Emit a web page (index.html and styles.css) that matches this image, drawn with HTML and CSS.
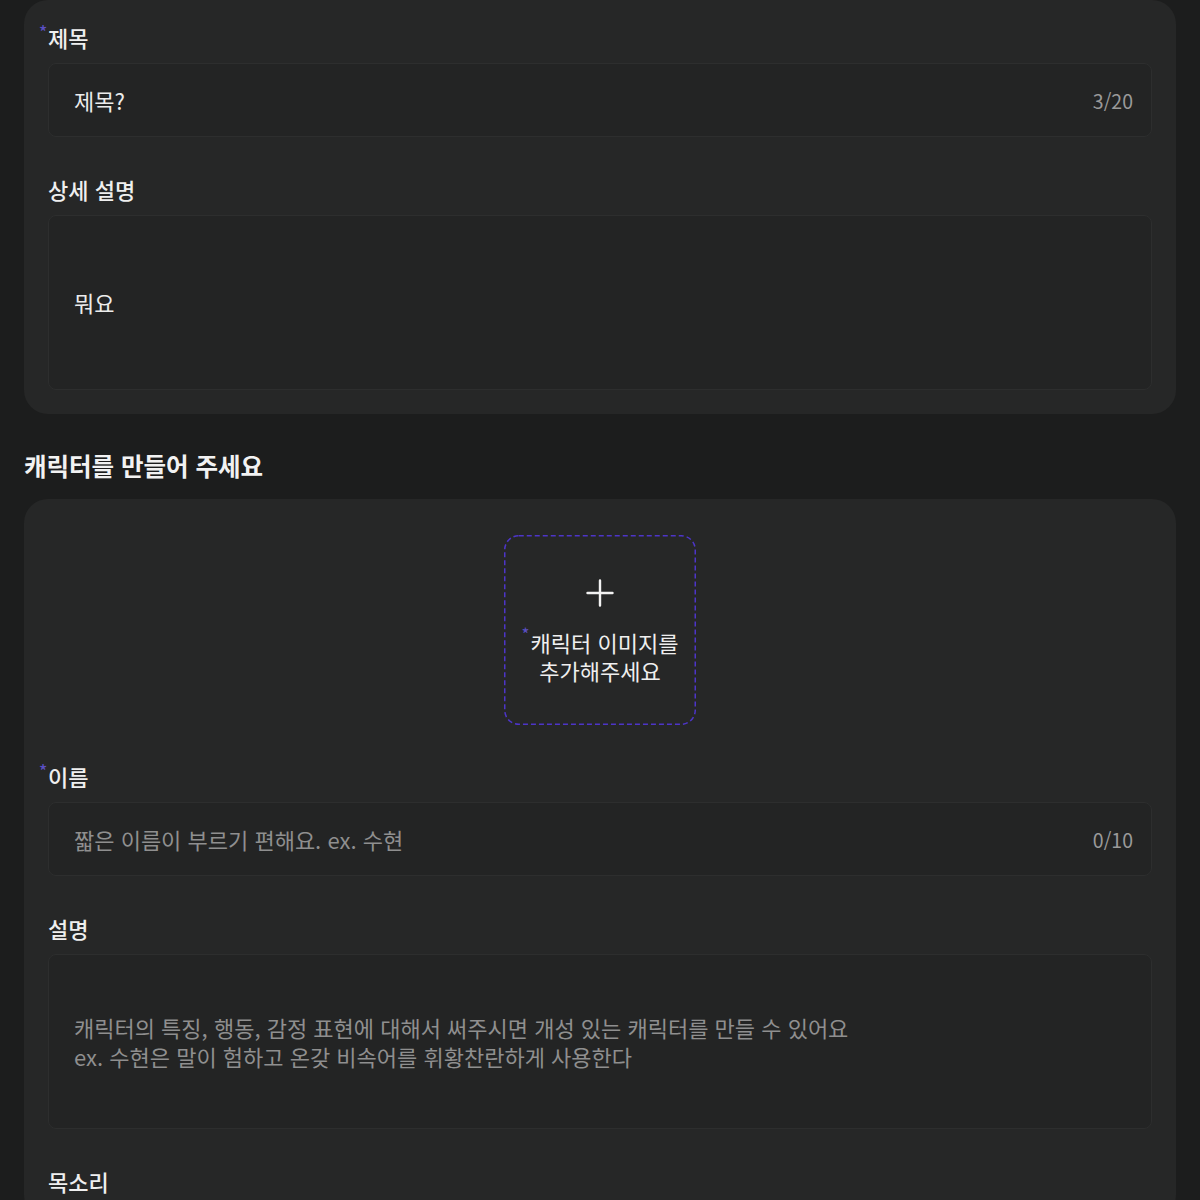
FILE: index.html
```html
<!DOCTYPE html>
<html lang="ko">
<head>
<meta charset="utf-8">
<link rel="stylesheet" href="styles.css">
</head>
<body>
<main class="page">
  <section class="card">
    <div class="field">
      <label class="label required">제목</label>
      <div class="input">
        <span class="value">제목?</span>
        <span class="counter">3/20</span>
      </div>
    </div>
    <div class="field">
      <label class="label">상세 설명</label>
      <div class="textarea">
        <span class="value">뭐요</span>
      </div>
    </div>
  </section>

  <h2 class="heading">캐릭터를 만들어 주세요</h2>

  <section class="card">
    <div class="upload-wrap">
      <div class="upload">
        <svg class="dash" width="192" height="190" viewBox="0 0 192 190" aria-hidden="true">
          <rect x="0.75" y="0.75" width="190.5" height="188.5" rx="14" ry="14" fill="none" stroke="#4d35c8" stroke-width="1.5" stroke-dasharray="5 3"/>
        </svg>
        <svg class="plus" width="28" height="28" viewBox="0 0 28 28" aria-hidden="true">
          <path d="M14 1.5v25M1.5 14h25" stroke="#f2f2f2" stroke-width="2.4" stroke-linecap="round" fill="none"/>
        </svg>
        <div class="upload-text">
          <div class="upload-line"><span class="star">*</span>캐릭터 이미지를</div>
          <div class="upload-line">추가해주세요</div>
        </div>
      </div>
    </div>
    <div class="field">
      <label class="label required">이름</label>
      <div class="input">
        <span class="placeholder">짧은 이름이 부르기 편해요. ex. 수현</span>
        <span class="counter">0/10</span>
      </div>
    </div>
    <div class="field">
      <label class="label">설명</label>
      <div class="textarea">
        <span class="placeholder">캐릭터의 특징, 행동, 감정 표현에 대해서 써주시면 개성 있는 캐릭터를 만들 수 있어요<br>ex. 수현은 말이 험하고 온갖 비속어를 휘황찬란하게 사용한다</span>
      </div>
    </div>
    <div class="field">
      <label class="label">목소리</label>
    </div>
  </section>
</main>
</body>
</html>
```

FILE: styles.css
```css
* { box-sizing: border-box; }
html, body {
  margin: 0;
  padding: 0;
  background: #1c1d1d;
  color: #efefef;
  font-family: "Noto Sans CJK KR", "Noto Sans", sans-serif;
}
.page {
  padding: 0 24px;
  display: flex;
  flex-direction: column;
}
.card {
  background: #262727;
  border-radius: 24px;
  padding: 23px 24px 24px;
  display: flex;
  flex-direction: column;
  gap: 38px;
}
.field {
  display: flex;
  flex-direction: column;
  gap: 12px;
}
.label {
  position: relative;
  font-size: 22px;
  line-height: 28px;
  font-weight: 500;
  color: #efefef;
}
.required::before,
.star {
  content: "*";
  color: #5b4fc4;
  font-size: 17px;
  line-height: 1;
}
.required::before {
  position: absolute;
  left: -9px;
  top: 0;
}
.input {
  height: 74px;
  background: #232424;
  border: 1px solid #2d2e2e;
  border-radius: 8px;
  padding: 0 18px 0 25px;
  display: flex;
  align-items: center;
  justify-content: space-between;
}
.textarea {
  height: 175px;
  background: #232424;
  border: 1px solid #2d2e2e;
  border-radius: 8px;
  padding: 0 25px;
  display: flex;
  align-items: center;
}
.value {
  font-size: 22px;
  line-height: 29px;
  color: #ececec;
}
.placeholder {
  font-size: 22px;
  line-height: 29px;
  color: #8f8f8f;
}
.counter {
  font-size: 19.5px;
  color: #9a9a9a;
}
.heading {
  margin: 35px 0 16px;
  font-size: 24.5px;
  line-height: 34px;
  font-weight: 700;
  color: #f2f2f2;
}
.upload-wrap {
  display: flex;
  justify-content: center;
  padding-top: 13px;
  margin-bottom: -1px;
}
.upload {
  position: relative;
  width: 192px;
  height: 190px;
  display: flex;
  flex-direction: column;
  align-items: center;
  justify-content: center;
  padding: 8px 0 5px;
}
.dash {
  position: absolute;
  left: 0;
  top: 0;
}
.plus {
  display: block;
  margin-bottom: 21px;
}
.upload-text {
  display: flex;
  flex-direction: column;
  align-items: center;
  font-size: 22px;
  line-height: 28px;
  color: #efefef;
}
.upload-line {
  height: 28px;
  white-space: nowrap;
}
.star {
  display: inline-block;
  vertical-align: top;
  margin-top: -3px;
  margin-right: 1px;
}
```
